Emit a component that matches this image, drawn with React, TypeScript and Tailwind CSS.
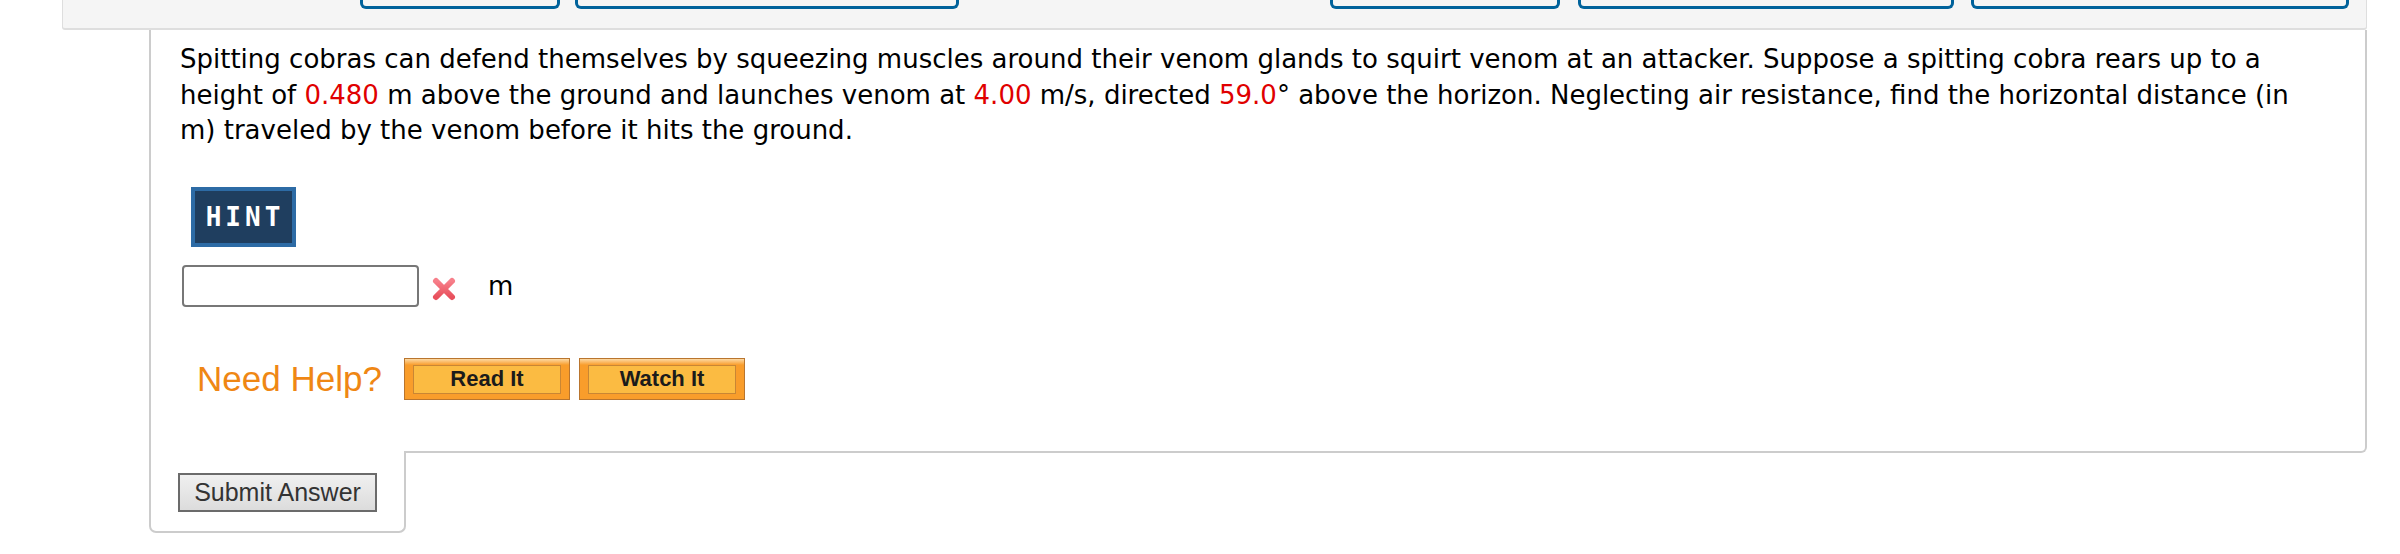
const tabs = [
  { w: "w-[200px]", ml: "ml-[297px]" },
  { w: "w-[384px]", ml: "ml-[15px]" },
  { w: "w-[230px]", ml: "ml-[371px]" },
  { w: "w-[376px]", ml: "ml-[18px]" },
  { w: "w-[378px]", ml: "ml-[17px]" },
];

function CrossIcon() {
  return (
    <svg width="26" height="26" viewBox="0 0 26 26">
      <defs>
        <linearGradient id="xg" x1="0" y1="0" x2="0" y2="1">
          <stop offset="0" stopColor="#f77f8a" />
          <stop offset="1" stopColor="#e8505c" />
        </linearGradient>
      </defs>
      <path d="M5 5 L21 21 M21 5 L5 21" stroke="url(#xg)" strokeWidth="6" strokeLinecap="round" />
    </svg>
  );
}

function HelpButton({ label }: { label: string }) {
  return (
    <button className="w-[166px] h-[42px] border border-[#b9752e] bg-[linear-gradient(#fcd9a4_0px,#f99d2b_6px,#f99d2b_100%)] px-[8px] pt-[6px] pb-[5px]">
      <div className="h-full border border-[#c98634] bg-[#fbbb42] flex items-center justify-center font-['Liberation_Sans',Arial,sans-serif] font-bold text-[22px] text-[#1b1b1b] leading-none">
        {label}
      </div>
    </button>
  );
}

export default function App() {
  return (
    <div className="w-[2400px] h-[554px] bg-white overflow-hidden font-['DejaVu_Sans',Verdana,sans-serif] text-black">
      {/* top toolbar */}
      <div className="ml-[62px] w-[2305px] h-[30px] bg-[#f5f5f5] border-b-2 border-x border-[#dedede] rounded-b-[3px] flex overflow-hidden">
        {tabs.map((t, i) => (
          <div
            key={i}
            className={`${t.w} ${t.ml} h-[9px] border-x-[3px] border-b-[3px] border-[#00629b] rounded-b-[6px]`}
          />
        ))}
      </div>

      {/* question panel */}
      <div className="ml-[149px] w-[2218px] h-[423px] border-x-2 border-b-2 border-[#cccccc] rounded-br-[6px] pl-[29px] pr-[42px] pt-[12px]">
        <p className="text-[26px] leading-[35.5px]">
          Spitting cobras can defend themselves by squeezing muscles around their venom glands to squirt venom at an attacker. Suppose a spitting cobra rears up to a height of{" "}
          <span className="text-[#e00000]">0.480</span> m above the ground and launches venom at{" "}
          <span className="text-[#e00000]">4.00</span> m/s, directed{" "}
          <span className="text-[#e00000]">59.0</span>° above the horizon. Neglecting air resistance, find the horizontal distance (in m) traveled by the venom before it hits the ground.
        </p>

        <div className="mt-[38px] ml-[11px] w-[105px] h-[60px] border-4 border-[#2d6ba5] bg-[#1f3e5f] flex items-center justify-center">
          <span className="font-['DejaVu_Sans_Mono',monospace] font-bold text-[26px] tracking-[4px] text-white leading-none pl-[3px]">
            HINT
          </span>
        </div>

        <div className="mt-[18px] ml-[2px] flex items-center">
          <div className="w-[237px] h-[42px] border-2 border-[#777777] rounded-[4px] bg-white" />
          <div className="ml-[12px] mt-[6px]">
            <CrossIcon />
          </div>
          <span className="ml-[31px] text-[26px] leading-none">m</span>
        </div>

        <div className="mt-[51px] ml-[17px] flex items-center">
          <span className="font-['Liberation_Sans',Arial,sans-serif] text-[35px] text-[#ef8714] leading-none w-[207px]">
            Need Help?
          </span>
          <HelpButton label="Read It" />
          <div className="ml-[9px]">
            <HelpButton label="Watch It" />
          </div>
        </div>
      </div>

      {/* submit tab */}
      <div className="relative -mt-[2px] ml-[149px] w-[257px] h-[82px] border-x-2 border-b-2 border-[#cccccc] rounded-b-[7px] bg-white pl-[27px] pt-[22px]">
        <button className="w-[199px] h-[39px] border-2 border-[#6b6b6b] bg-[linear-gradient(#f0f0f0,#dcdcdc)] font-['Liberation_Sans',Arial,sans-serif] text-[25px] text-[#333333] leading-none">
          Submit Answer
        </button>
      </div>
    </div>
  );
}
